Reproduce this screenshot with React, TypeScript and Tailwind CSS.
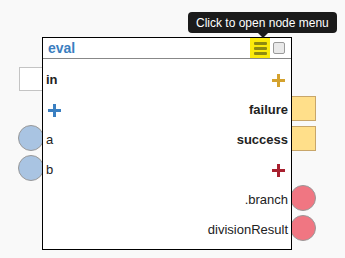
import React from 'react';

type Port = 'box' | 'ball' | 'none';

type Row = {
  left?: React.ReactNode;
  right?: React.ReactNode;
  leftPort?: Port;
  rightPort?: Port;
};

function Plus({ color }: { color: string }) {
  return (
    <svg width="13" height="13" viewBox="0 0 13 13">
      <rect x="0" y="5" width="13" height="3" fill={color} />
      <rect x="5" y="0" width="3" height="13" fill={color} />
    </svg>
  );
}

const rows: Row[] = [
  {
    left: <span className="font-bold">in</span>,
    leftPort: 'box',
    right: (
      <span className="mr-[3px]">
        <Plus color="#d4a22e" />
      </span>
    ),
  },
  {
    left: (
      <span className="ml-[2px]">
        <Plus color="#3a7fc1" />
      </span>
    ),
    right: <span className="font-bold">failure</span>,
    rightPort: 'box',
  },
  { left: 'a', leftPort: 'ball', right: <span className="font-bold">success</span>, rightPort: 'box' },
  {
    left: 'b',
    leftPort: 'ball',
    right: (
      <span className="mr-[3px]">
        <Plus color="#a8202f" />
      </span>
    ),
  },
  { right: '.branch', rightPort: 'ball' },
  { right: 'divisionResult', rightPort: 'ball' },
];

function NodeRow({ row }: { row: Row }) {
  return (
    <div className="relative flex h-[30px] items-center justify-between px-[3px]">
      {/* input port */}
      {row.leftPort === 'box' && (
        <div className="absolute -z-10 left-[-24px] top-[2px] h-[24px] w-[24px] border border-[#c4c4c4] bg-white" />
      )}
      {row.leftPort === 'ball' && (
        <div className="absolute -z-10 left-[-25px] top-0 h-[26px] w-[26px] rounded-full border border-[#999] bg-[#a9c4e2]" />
      )}
      <div className="flex items-center">{row.left}</div>
      <div className="flex items-center">{row.right}</div>
      {/* output port */}
      {row.rightPort === 'box' && (
        <div className="absolute -z-10 right-[-25px] top-[1px] h-[25px] w-[25px] border border-[#c8a66a] bg-[#ffdf8a]" />
      )}
      {row.rightPort === 'ball' && (
        <div className="absolute -z-10 right-[-25px] top-0 h-[26px] w-[26px] rounded-full border border-[#999] bg-[#f07682]" />
      )}
    </div>
  );
}

export default function App() {
  return (
    <div className="relative isolate h-[258px] w-[345px] overflow-hidden bg-[#f9f9f9] font-['Liberation_Sans',Arial,sans-serif] text-[13px] text-[#222]">
      {/* node */}
      <div className="absolute left-[42px] top-[37px] w-[250px] border border-black bg-white">
        <div className="flex h-[21px] items-center border-b border-[#888] pl-[5px] pr-[6px]">
          <span className="text-[14px] font-bold text-[#3a7ebf]">eval</span>
          <div className="ml-auto flex items-center gap-[3px]">
            <div className="flex h-[20px] w-[20px] flex-col items-center justify-center gap-[2px] bg-[#fbea0b]">
              <div className="h-[3px] w-[13px] rounded-[1px] bg-[#8e8a10]" />
              <div className="h-[3px] w-[13px] rounded-[1px] bg-[#8e8a10]" />
              <div className="h-[3px] w-[13px] rounded-[1px] bg-[#8e8a10]" />
            </div>
            <div className="h-[12px] w-[12px] rounded-[2px] border border-[#9a9a9a] bg-[#e9e9e9]" />
          </div>
        </div>
        <div className="pb-[4px] pt-[6px]">
          {rows.map((r, i) => (
            <NodeRow key={i} row={r} />
          ))}
        </div>
      </div>

      {/* tooltip */}
      <div className="absolute left-[188px] top-[12px] flex h-[21px] items-center rounded-[4px] bg-[#1b1b1b] px-[8px] text-[12px] text-white">
        Click to open node menu
        <div className="absolute left-[70px] top-[21px] h-0 w-0 border-x-[5px] border-t-[5px] border-x-transparent border-t-[#1b1b1b]" />
      </div>
    </div>
  );
}
